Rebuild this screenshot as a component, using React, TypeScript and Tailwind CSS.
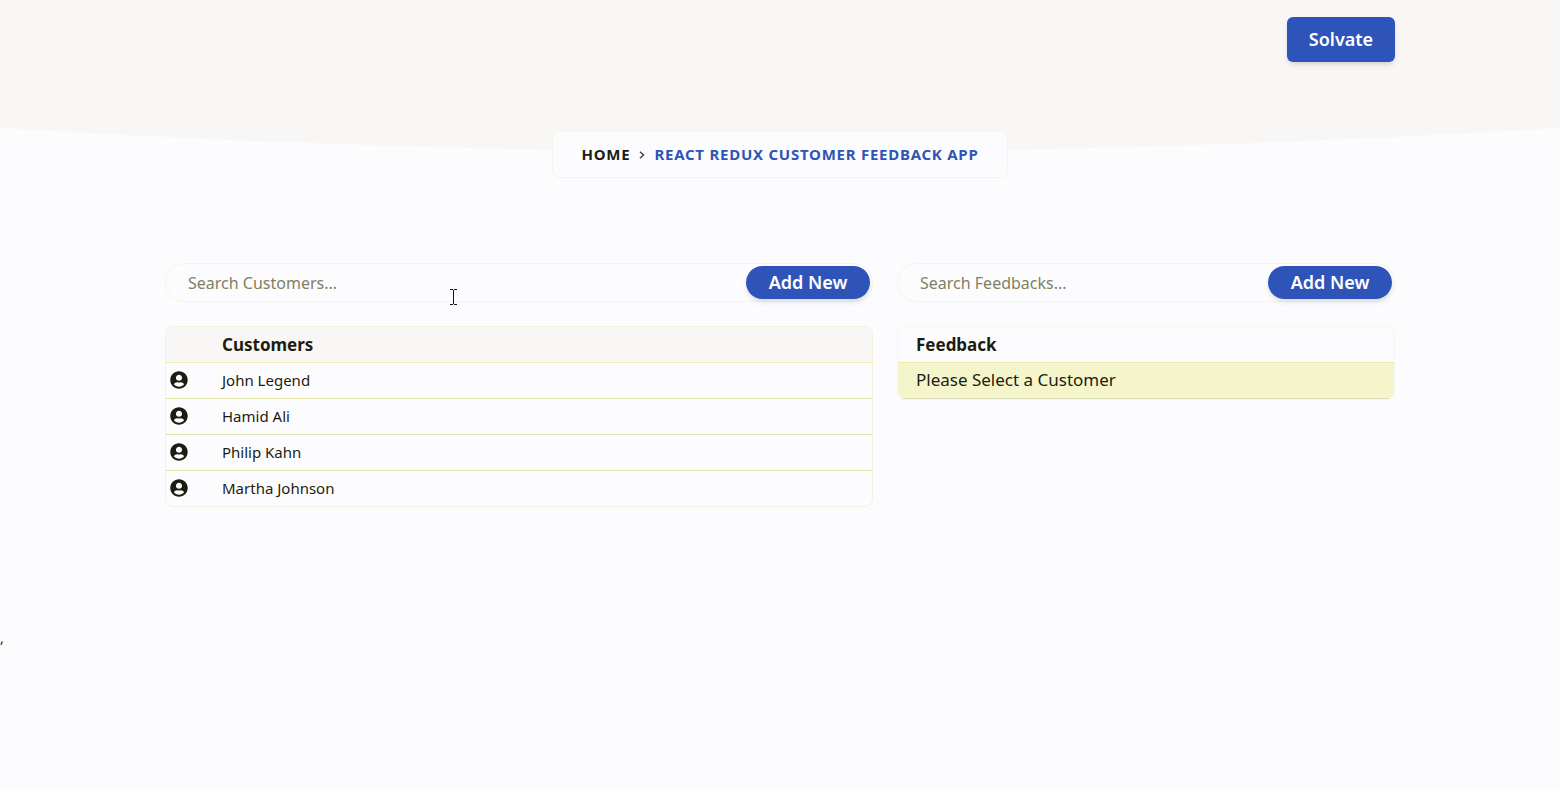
import { FaUserCircle } from "react-icons/fa";

const customers = ["John Legend", "Hamid Ali", "Philip Kahn", "Martha Johnson"];

const pill =
  "h-[33px] w-31 shrink-0 rounded-full bg-[#2e54ba] text-[18px] font-semibold text-white shadow-md";

function Search({ label, onAdd }: { label: string; onAdd: string }) {
  return (
    <div className="flex h-[39px] items-center rounded-full border border-[#f5f5ea] bg-[#fcfcff] pr-0.5 pl-5.5">
      <input
        type="search"
        aria-label={label}
        placeholder={`${label}...`}
        className="min-w-0 flex-1 bg-transparent text-[16px] text-[#222] outline-none placeholder:text-[#808060]"
      />
      <button type="button" aria-label={onAdd} className={pill}>
        Add New
      </button>
    </div>
  );
}

function TextCursor() {
  return (
    <svg
      className="pointer-events-none absolute top-[289px] left-[449px] h-4 w-2"
      viewBox="0 0 8 16"
      fill="none"
      stroke="#111"
      shapeRendering="crispEdges"
      aria-hidden="true"
    >
      <path d="M1 0.5H4M5 0.5H8M4.5 1V15M1 15.5H4M5 15.5H8" />
    </svg>
  );
}

export default function App() {
  return (
    <div className="relative min-h-screen bg-[#fcfcff] font-['Noto_Sans','Open_Sans',sans-serif] text-[#1c1c10]">
      <header className="relative h-[152px]">
        <svg
          className="absolute inset-0 h-full w-full"
          viewBox="0 0 1560 152"
          preserveAspectRatio="none"
          aria-hidden="true"
        >
          <path d="M0 0H1560V128Q780 176 0 128Z" fill="#f8f7f5" />
        </svg>
        <div className="relative mx-auto flex max-w-[1230px] justify-end pt-[17px]">
          <button
            type="button"
            className="h-[45px] w-[108px] rounded-md bg-[#2e54ba] text-[18px] font-semibold text-white shadow-md"
          >
            Solvate
          </button>
        </div>
      </header>

      <nav
        aria-label="Breadcrumb"
        className="relative mx-auto -mt-[21px] flex h-[47px] w-[456px] items-center justify-center gap-2 rounded-lg border border-[#f5f5ea] bg-[#fcfcff] text-[15px] font-bold tracking-wider uppercase"
      >
        <a href="#home">Home</a>
        <svg className="h-2 w-2" viewBox="0 0 8 8" fill="none" stroke="#444" strokeWidth="1.5" aria-hidden="true">
          <path d="M2 0.8L5.5 4L2 7.2" />
        </svg>
        <a href="#app" className="text-[#2e54b4]">
          React Redux Customer Feedback App
        </a>
      </nav>

      <main className="mx-auto mt-[85px] grid max-w-[1230px] grid-cols-[708fr_498fr] items-start gap-6">
        <section>
          <Search label="Search Customers" onAdd="Add New customer" />
          <div className="mt-6 overflow-hidden rounded-lg border border-[#f3f3e0]">
            <table className="w-full border-collapse text-left">
              <thead>
                <tr className="h-[35px] border-b border-[#eeecb0] bg-[#f8f7f5] text-[17px]">
                  <th className="w-14" />
                  <th className="font-bold">Customers</th>
                </tr>
              </thead>
              <tbody>
                {customers.map((name) => (
                  <tr key={name} className="h-9 border-b border-[#e2e2a8] text-[15px] last:border-0">
                    <td className="pl-1">
                      <FaUserCircle className="h-4.5 w-4.5" aria-hidden="true" />
                    </td>
                    <td>{name}</td>
                  </tr>
                ))}
              </tbody>
            </table>
          </div>
        </section>

        <section>
          <Search label="Search Feedbacks" onAdd="Add New feedback" />
          <div className="mt-6 overflow-hidden rounded-lg border border-[#f6f6f0]">
            <table className="w-full border-collapse text-left text-[17px]">
              <thead>
                <tr className="h-[35px] border-b border-[#eeecb0]">
                  <th className="pl-4.5 font-bold">Feedback</th>
                </tr>
              </thead>
              <tbody>
                <tr className="h-9 border-b border-[#dcdcb8] bg-[#f5f5cb]">
                  <td className="pl-4.5">Please Select a Customer</td>
                </tr>
              </tbody>
            </table>
          </div>
        </section>
      </main>

      <p className="mt-30 text-[14px]">,</p>
      <TextCursor />
    </div>
  );
}
